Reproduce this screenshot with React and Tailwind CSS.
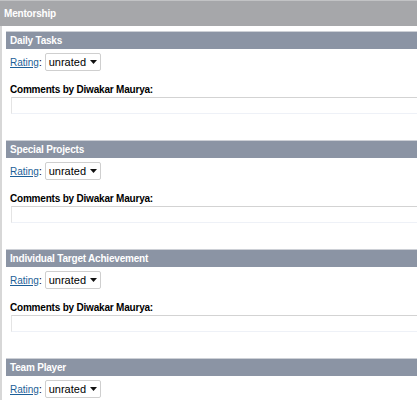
import React from "react"

const sections = ["Daily Tasks", "Special Projects", "Individual Target Achievement", "Team Player"]

function RatingSelect() {
  return (
    <div className="ml-[3px] w-[56px] h-[18px] border border-[#cfcfcf] rounded-[2px] bg-white flex items-center justify-between pl-[3px] pr-[3px]">
      <span className="text-[11px] text-black leading-none">unrated</span>
      <svg width="7" height="4" viewBox="0 0 7 4">
        <path d="M0 0h7L3.5 4z" fill="#111" />
      </svg>
    </div>
  )
}

function Section({ title }) {
  return (
    <div className="h-[109px]">
      <div className="h-[18px] bg-[#8b94a4] border-t border-[#cdd0d6] pl-1 flex items-center text-white font-bold text-[10px] tracking-[-0.2px]">
        {title}
      </div>
      <div className="mt-[4px] pl-1 flex items-center text-[10px]">
        <a href="#" className="text-[#1d5f98] underline">Rating</a>
        <span className="text-black">:</span>
        <RatingSelect />
      </div>
      <div className="mt-[12px] pl-1 h-[12px] flex items-center font-bold text-[10px] tracking-[-0.2px] text-black">
        Comments by Diwakar Maurya:
      </div>
      <div className="mt-[2px] ml-[5px] h-[17px] border border-[#e4e4e4] border-t-[#d3d3d3] border-b-[#eef1f7] bg-white"></div>
    </div>
  )
}

export default function App() {
  return (
    <div className="w-[417px] h-[400px] overflow-hidden bg-white font-['Liberation_Sans',Arial,sans-serif]">
      <div className="w-[440px]">
        <div className="h-[26px] bg-[#a6a7aa] border-t border-[#c2c3c5] pl-1 flex items-center text-white font-bold text-[10px] tracking-[-0.2px]">
          Mentorship
        </div>
        <div className="border-l-2 border-[#d7d7d7] pl-1 pt-[5px]">
          {sections.map((s) => (
            <Section key={s} title={s} />
          ))}
        </div>
      </div>
    </div>
  )
}
